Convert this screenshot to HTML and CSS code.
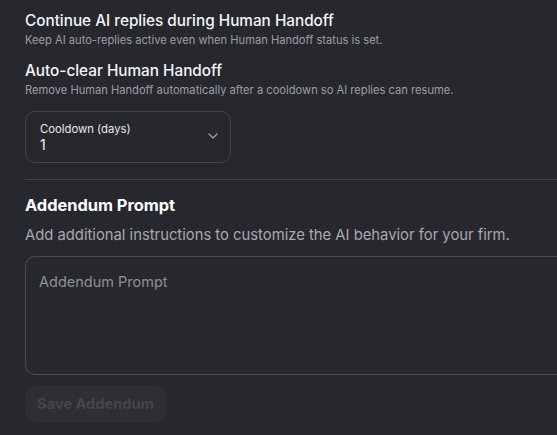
FILE: index.html
```html
<!DOCTYPE html>
<html>
<head>
<meta charset="utf-8">
<link rel="stylesheet" href="styles.css">
</head>
<body>
<div class="page">
  <section class="setting">
    <div class="setting-title">Continue AI replies during Human Handoff</div>
    <div class="setting-desc">Keep AI auto-replies active even when Human Handoff status is set.</div>
  </section>
  <section class="setting second">
    <div class="setting-title">Auto-clear Human Handoff</div>
    <div class="setting-desc">Remove Human Handoff automatically after a cooldown so AI replies can resume.</div>
  </section>
  <div class="select">
    <div class="select-text">
      <div class="select-label">Cooldown (days)</div>
      <div class="select-value">1</div>
    </div>
    <svg class="chevron" width="10" height="6" viewBox="0 0 10 6"><path d="M1 1l4 4 4-4" fill="none" stroke="#9a9ca3" stroke-width="1.4" stroke-linecap="round" stroke-linejoin="round"/></svg>
  </div>
  <hr class="divider">
  <h2 class="heading">Addendum Prompt</h2>
  <p class="lead">Add additional instructions to customize the AI behavior for your firm.</p>
  <div class="textarea"><span class="placeholder">Addendum Prompt</span></div>
  <button class="btn" disabled>Save Addendum</button>
</div>
</body>
</html>
```
FILE: styles.css
```css
html, body {
  margin: 0;
  padding: 0;
  background: #27282d;
  height: 100%;
  overflow: hidden;
}
body {
  font-family: Inter, "Noto Sans", sans-serif;
  color: #f2f2f4;
}
.page {
  padding: 11px 0 0 25px;
}
.setting-title {
  font-size: 15.3px;
  line-height: 20px;
  font-weight: 500;
  color: #f4f4f6;
}
.setting-desc {
  font-size: 11.15px;
  line-height: 16px;
  color: #9c9ea5;
  margin-top: 1px;
}
.second {
  margin-top: 13px;
}
.select {
  margin-top: 13px;
  width: 204px;
  height: 50px;
  border: 1px solid #45464c;
  border-radius: 10px;
  display: flex;
  align-items: center;
  justify-content: space-between;
  box-sizing: content-box;
}
.select-text {
  padding-left: 14px;
  padding-top: 2px;
}
.select-label {
  font-size: 11.3px;
  line-height: 14px;
  color: #e8e8ea;
}
.select-value {
  font-size: 14px;
  line-height: 18px;
  color: #f2f2f4;
}
.chevron {
  margin-right: 12px;
  margin-bottom: 3px;
}
.divider {
  border: none;
  border-top: 1px solid #45464c;
  margin: 16px 0 0 0;
}
.heading {
  margin: 14px 0 0 0;
  font-size: 16.4px;
  line-height: 22px;
  font-weight: 700;
  color: #ffffff;
}
.lead {
  margin: 10px 0 0 0;
  font-size: 14.8px;
  line-height: 18px;
  color: #a7a9b0;
}
.textarea {
  margin-top: 12px;
  height: 119px;
  border: 1px solid #4a4b51;
  border-right: none;
  border-radius: 10px 0 0 10px;
  padding: 14px 13px;
  box-sizing: border-box;
  margin-right: -10px;
}
.placeholder {
  font-size: 14.5px;
  line-height: 18px;
  color: #8e9097;
}
.btn {
  margin-top: 11px;
  width: 141px;
  height: 36px;
  border: none;
  border-radius: 9px;
  background: #2e2f34;
  color: #45464c;
  font-family: Inter, "Noto Sans", sans-serif;
  font-size: 14.6px;
  font-weight: 700;
  padding: 0;
}
```
